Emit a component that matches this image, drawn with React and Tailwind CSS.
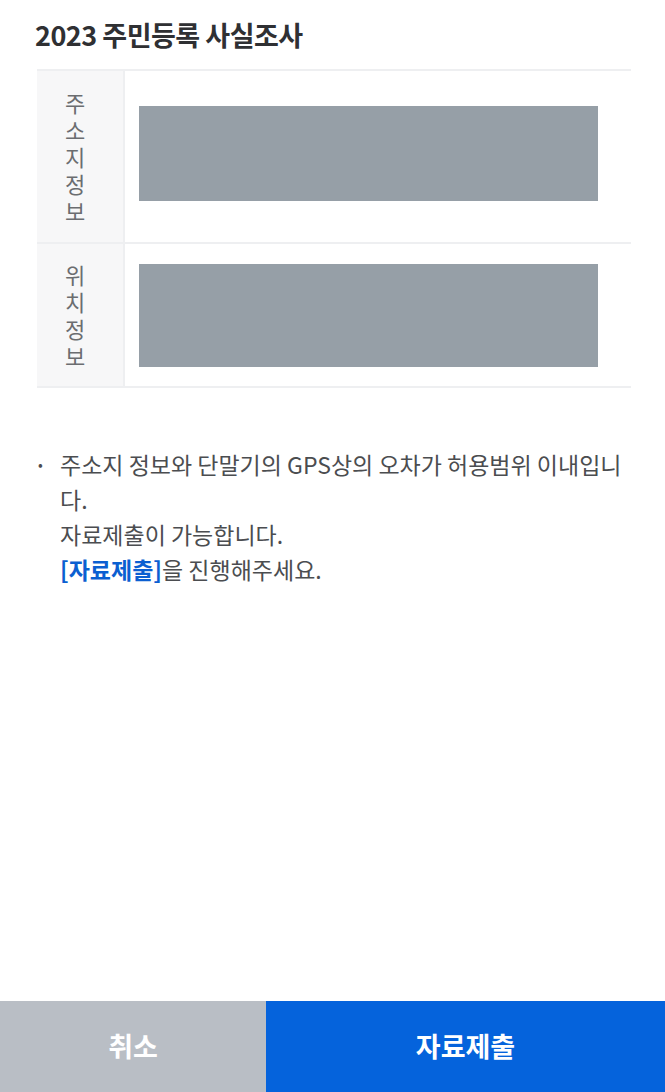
export default function App() {
  const font = { fontFamily: '"Noto Sans CJK KR", "Noto Sans", sans-serif' };
  return (
    <div style={font} className="flex h-[1092px] w-[665px] flex-col bg-white">
      <h1 className="px-[35px] pt-[16px] text-[27px] font-bold leading-[38px] tracking-[-0.5px] text-[#2f3033]">
        2023 주민등록 사실조사
      </h1>
      <div className="ml-[37px] mr-[34px] mt-[15px] border-t-2 border-[#eeeff1]">
        <div className="flex border-b-2 border-[#eeeff1]">
          <div className="flex w-[88px] flex-col items-center border-r-2 border-[#eeeff1] bg-[#f7f7f8] py-[18px] pr-[10px] text-[22px] leading-[27px] text-[#6b6d70]">
            <span>주</span>
            <span>소</span>
            <span>지</span>
            <span>정</span>
            <span>보</span>
          </div>
          <div className="flex flex-1 items-center pb-[6px] pl-[14px] pr-[33px]">
            <div className="h-[95px] w-full bg-[#969fa7]" />
          </div>
        </div>
        <div className="flex border-b-2 border-[#eeeff1]">
          <div className="flex w-[88px] flex-col items-center border-r-2 border-[#eeeff1] bg-[#f7f7f8] py-[17px] pr-[10px] text-[22px] leading-[27px] text-[#6b6d70]">
            <span>위</span>
            <span>치</span>
            <span>정</span>
            <span>보</span>
          </div>
          <div className="flex flex-1 items-center pl-[14px] pr-[33px]">
            <div className="h-[103px] w-full bg-[#969fa7]" />
          </div>
        </div>
      </div>
      <div className="mt-[59px] flex pl-[38px] pr-[35px] text-[23px] leading-[35px] text-[#4b4d50]">
        <span className="w-[22px] shrink-0 text-[14px]">•</span>
        <p className="flex-1">
          주소지 정보와 단말기의 GPS상의 오차가 허용범위 이내입니다.
          <br />
          자료제출이 가능합니다.
          <br />
          <span className="font-bold text-[#0b5fd1]">[자료제출]</span>을 진행해주세요.
        </p>
      </div>
      <div className="mt-auto flex h-[91px]">
        <button className="flex w-[266px] items-center justify-center bg-[#b9bec5] text-[27px] font-bold text-white">
          취소
        </button>
        <button className="flex flex-1 items-center justify-center bg-[#0563dc] text-[27px] font-bold text-white">
          자료제출
        </button>
      </div>
    </div>
  );
}
